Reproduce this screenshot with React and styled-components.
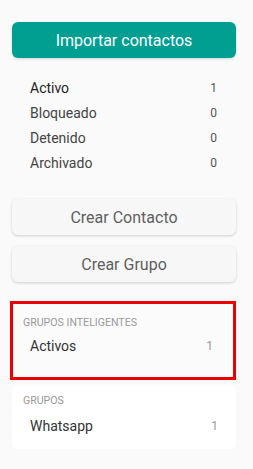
import styled, { createGlobalStyle } from "styled-components";

const GlobalStyle = createGlobalStyle`
  html, body {
    margin: 0;
    padding: 0;
    background: #fafafa;
    font-family: Roboto, "Liberation Sans", sans-serif;
  }
`;

const statuses = [
  { name: "Activo", count: 1, strong: true },
  { name: "Bloqueado", count: 0 },
  { name: "Detenido", count: 0 },
  { name: "Archivado", count: 0 },
];

const App = () => (
  <>
    <GlobalStyle />
    <Sidebar>
      <ImportButton>Importar contactos</ImportButton>
      <StatusList>
        {statuses.map((s) => (
          <StatusRow key={s.name}>
            <StatusName strong={s.strong}>{s.name}</StatusName>
            <StatusCount>{s.count}</StatusCount>
          </StatusRow>
        ))}
      </StatusList>
      <Actions>
        <ActionButton>Crear Contacto</ActionButton>
        <ActionButton>Crear Grupo</ActionButton>
      </Actions>
      <GroupCard highlighted>
        <GroupTitle>Grupos inteligentes</GroupTitle>
        <GroupRow>
          <GroupName>Activos</GroupName>
          <GroupCount>1</GroupCount>
        </GroupRow>
      </GroupCard>
      <GroupCard>
        <GroupTitle>Grupos</GroupTitle>
        <GroupRow spaced>
          <GroupName>Whatsapp</GroupName>
          <GroupCount>1</GroupCount>
        </GroupRow>
      </GroupCard>
    </Sidebar>
  </>
);

const Sidebar = styled.div`
  width: 224px;
  padding: 22px 0 0 12px;
  display: flex;
  flex-direction: column;
`;

const ImportButton = styled.button`
  height: 36px;
  border: none;
  border-radius: 6px;
  background: #009f92;
  color: #fff;
  font-family: inherit;
  font-size: 16px;
  box-shadow: 0 1px 3px rgba(0, 0, 0, 0.15);
`;

const StatusList = styled.div`
  margin-top: 17px;
  padding: 0 18px;
  display: flex;
  flex-direction: column;
`;

const StatusRow = styled.div`
  height: 25px;
  display: flex;
  justify-content: space-between;
  align-items: center;
`;

const StatusName = styled.span`
  font-size: 14px;
  color: ${(p) => (p.strong ? "#222" : "#444")};
`;

const StatusCount = styled.span`
  font-size: 12px;
  color: #555;
  width: 8px;
  text-align: right;
  margin-right: 1px;
`;

const Actions = styled.div`
  margin-top: 24px;
  display: flex;
  flex-direction: column;
  gap: 11px;
`;

const ActionButton = styled.button`
  height: 36px;
  border: none;
  border-radius: 6px;
  background: #f7f7f7;
  color: #5f5f5f;
  font-family: inherit;
  font-size: 16px;
  box-shadow: 0 1px 3px rgba(0, 0, 0, 0.18);
`;

const GroupCard = styled.div`
  box-sizing: border-box;
  margin-top: ${(p) => (p.highlighted ? "19px" : "5px")};
  margin-left: ${(p) => (p.highlighted ? "-2px" : "0")};
  width: ${(p) => (p.highlighted ? "226px" : "224px")};
  height: ${(p) => (p.highlighted ? "79px" : "64px")};
  padding: ${(p) => (p.highlighted ? "13px 20px 0 10px" : "10px 18px 0 11px")};
  background: ${(p) => (p.highlighted ? "#fbfbfb" : "#fff")};
  border: ${(p) => (p.highlighted ? "3px solid #ee0000" : "none")};
  border-radius: ${(p) => (p.highlighted ? "0" : "6px")};
`;

const GroupTitle = styled.div`
  font-size: 10.6px;
  line-height: 12px;
  text-transform: uppercase;
  color: #999;
`;

const GroupRow = styled.div`
  margin-top: ${(p) => (p.spaced ? "11px" : "9px")};
  padding-left: 7px;
  display: flex;
  justify-content: space-between;
  align-items: center;
`;

const GroupName = styled.span`
  font-size: 14px;
  color: #333;
`;

const GroupCount = styled.span`
  font-size: 12px;
  color: #999;
`;

export default App;
